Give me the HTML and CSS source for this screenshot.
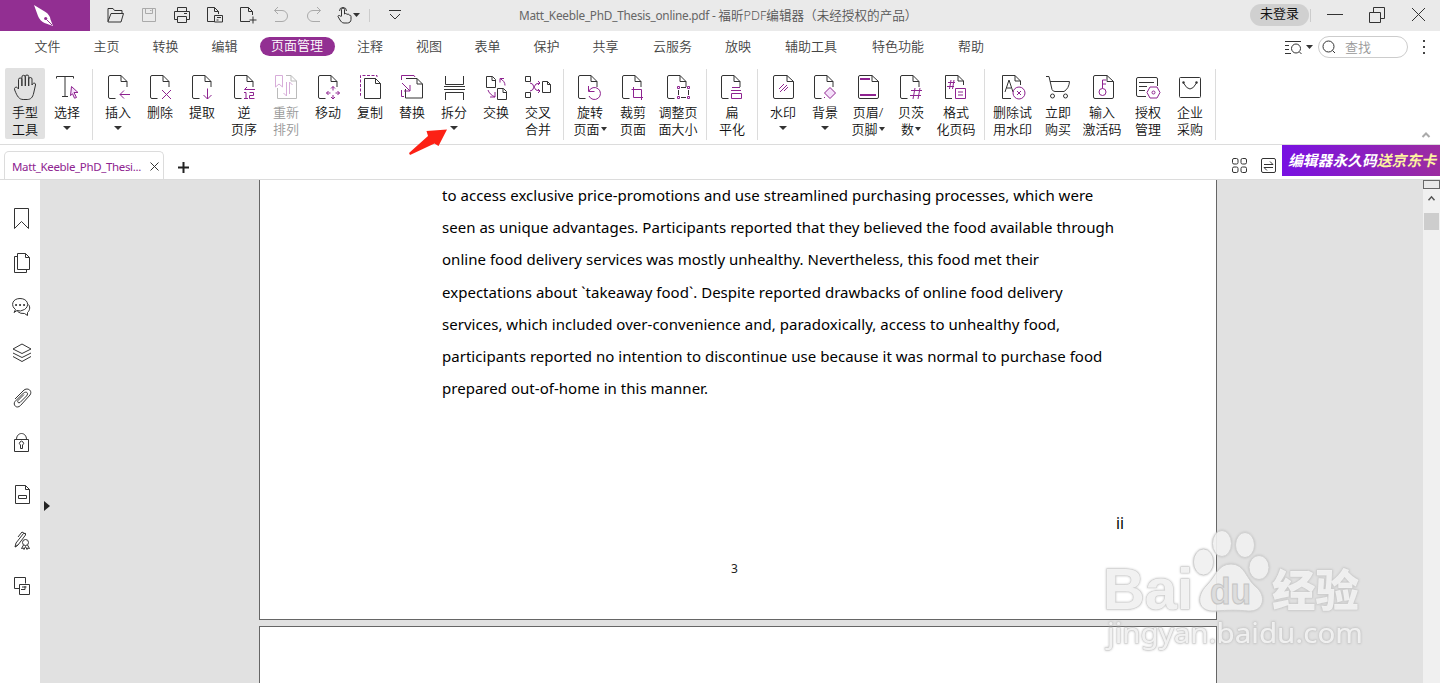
FILE: index.html
```html
<!DOCTYPE html>
<html lang="zh-CN">
<head>
<meta charset="utf-8">
<title>福昕PDF编辑器</title>
<link rel="stylesheet" href="styles.css">
</head>
<body>
<svg class="defs" width="0" height="0">
  <symbol id="cut" viewBox="0 0 20 24"><path d="M7.500 23.500H2a1.500 1.500 0 0 1-1.500-1.500V2A1.500 1.500 0 0 1 2 .5H13l6 6V12M13 .5V6.500h6"/></symbol>
  <symbol id="full" viewBox="0 0 21 24"><path d="M2 .5H14l6.500 6V22a1.500 1.500 0 0 1-1.500 1.500H2A1.500 1.500 0 0 1 .5 22V2A1.500 1.500 0 0 1 2 .5zM14 .5v6h6.500"/></symbol>
</svg>
<div class="app">
  <header class="titlebar">
    <div class="brand"><svg width="22" height="24" viewBox="0 0 22 24"><path class="white" d="M1 1 12.500 8q4.500 3 5 7.500L20 22l-8.500-3q-4.500-2-6.500-7z"/><path class="brand-line" d="m19 21-5.500-5.500"/><circle class="brand-dot" cx="12.700" cy="14.500" r="1.600"/></svg></div>
    <div class="quick">
      <svg viewBox="0 0 20 20"><path d="M2 16.500V3.500h5l1.500 2H16v3M2 16.500 5 8.500h12.500l-2.500 8.500H2z"/></svg>
      <svg class="off" viewBox="0 0 20 20"><path d="M3.500 3.500h13v13h-13zM6.500 3.500v5h7v-5M11 5.500h1.500"/></svg>
      <svg viewBox="0 0 20 20"><path d="M5.500 6V2.500h9V6M5.500 14.500H2.500v-8h15v8h-3M5.500 11.500h9v6h-9zM12 8.500h3"/></svg>
      <svg viewBox="0 0 20 20"><path d="M9 16.500H2.500v-14h7l4 4V9M9.500 2.500v4h4M9.500 10.500h8v6.500h-8zM12 12.500h4M11.500 15h2"/></svg>
      <svg viewBox="0 0 20 20"><path d="M12 16.500H2.500v-14h8l4 4V10M10.500 2.500v4h4M15 11.500v7M11.500 15h7"/></svg>
      <svg class="off" viewBox="0 0 20 20"><path d="M7 2 3.500 5.500 7 9M3.500 5.500H11a5.500 5.500 0 0 1 0 11H4"/></svg>
      <svg class="off" viewBox="0 0 20 20"><path d="m13 2 3.500 3.500L13 9M16.500 5.500H9a5.500 5.500 0 0 0 0 11h7"/></svg>
      <svg class="touch" viewBox="0 0 26 20"><path d="M6.500 11V4.500a1.500 1.500 0 0 1 3 0V9c1-1 2.300-.5 2.500.5 1-.8 2-.3 2.300.7 1-.3 1.700.3 1.700 1.300v3c0 2-1.500 3.500-3.500 3.500H9c-2 0-3-1.500-4-3L3 11.500c0-1.500 2-1.500 3.500.5M4.500 6a3.500 3.500 0 1 1 7 0"/><path class="dark" d="M18 8h7l-3.500 4z"/></svg>
      <i class="quick-sep"></i>
      <svg class="more" viewBox="0 0 14 14"><path d="M1 2.500h12M2 6l5 5 5-5"/></svg>
    </div>
    <div class="doc-title"><span class="latin">Matt_Keeble_PhD_Thesis_online.pdf - </span>福昕PDF编辑器（未经授权的产品）</div>
    <div class="login">未登录</div>
    <i class="login-sep"></i>
    <div class="window"><svg width="96" height="20" viewBox="0 0 96 20"><path d="M0 9.500h16M42.500 7.500h11v10h-11zM46.500 7V2.500h11v11H54M85 3l13 13M98 3 85 16"/></svg></div>
  </header>
  <nav class="menu">
    <span>文件</span><span>主页</span><span>转换</span><span>编辑</span><span class="w86"><b>页面管理</b></span><span class="w60">注释</span><span class="w58">视图</span><span>表单</span><span>保护</span><span>共享</span><span class="w75">云服务</span><span class="w56">放映</span><span class="w90">辅助工具</span><span class="w84">特色功能</span><span class="w62">帮助</span>
    <div class="search-area">
      <svg width="30" height="18" viewBox="0 0 30 18"><path d="M1 3.500h16M1 7.500h4M1 11.500h4M1 15.500h6M15.500 14l2 2"/><circle cx="12" cy="10.500" r="4.500"/><path class="dark" d="M22 7h7l-3.500 4z"/></svg>
      <div class="search"><svg width="14" height="14" viewBox="0 0 14 14"><circle cx="6.500" cy="6.500" r="5.500"/><path d="m10.500 10.500 2.500 2.500"/></svg>查找</div>
      <div class="dots"><i></i><i></i><i></i></div>
    </div>
  </nav>
  <section class="ribbon">
    <div class="tool w40 active"><svg viewBox="0 0 40 30"><path d="M13.500 17V7.500q0-1.500 1.700-1.500t1.700 1.500V14 5q0-1.700 1.700-1.700T20.300 5v9-9.500q0-1.500 1.700-1.500t1.700 1.500V14 7q0-1.500 1.600-1.500T27 7v6c.8-2.500 4-2.500 3.500 0l-1.800 8c-1 4.500-3 6.500-6.500 6.500h-4c-4 0-6-3-8.500-9.500-1-2.500 1.500-3.500 2.500-2.500z"/></svg><p>手型<br>工具</p></div>
    <div class="tool w44"><svg viewBox="0 0 40 30"><path d="M9.500 6.500v-2h17v2M18 4.500v20M15 24.500h6"/><path class="p tint" d="m24.500 14.500 6.500 6h-4l2.500 5-2 .7-2-4.500-2 2z"/></svg><p>选择</p><i class="arrow"></i></div>
    <i class="sep first"></i>
    <div class="tool"><svg viewBox="0 0 40 30"><use href="#cut" x="10" y="3" width="20" height="24"/><path class="p" d="M32 22.500H22m4-4-4 4 4 4"/></svg><p>插入</p><i class="arrow"></i></div>
    <div class="tool"><svg viewBox="0 0 40 30"><use href="#cut" x="10" y="3" width="20" height="24"/><path class="p" d="m22 18 9 9m0-9-9 9"/></svg><p>删除</p></div>
    <div class="tool"><svg viewBox="0 0 40 30"><use href="#cut" x="10" y="3" width="20" height="24"/><path class="p" d="M25.500 16.500V27m-4-4 4 4 4-4"/></svg><p>提取</p></div>
    <div class="tool"><svg viewBox="0 0 40 30"><use href="#cut" x="10" y="3" width="20" height="24"/><path class="p" d="M31 17.500H20.500l2.500-2.500M20 20.500h2v6m-2 0h4m1.500-6h4v3h-4v3h5"/></svg><p>逆<br>页序</p></div>
    <div class="tool off"><svg viewBox="0 0 40 30"><path d="M20 3.500h5l5.500 5.500V26.500h-19V16M25 3.500V9h5.500"/><path class="p" d="M9.500 3.500h7V15l-3.500-3-3.500 3zM20.500 10v14l-3-3M23.500 22V10l3 3"/></svg><p>重新<br>排列</p></div>
    <div class="tool"><svg viewBox="0 0 40 30"><use href="#cut" x="10" y="3" width="20" height="24"/><path class="p" d="M25 18.500v-4m-2 2 2-2 2 2M25 23v4m-2-2 2 2 2-2M22.500 21h-4m2-2-2 2 2 2M27.500 21h4m-2-2 2 2-2 2"/></svg><p>移动</p></div>
    <div class="tool"><svg viewBox="0 0 40 30"><path d="M14.500 6.500h11l5 5v15h-16zM25.500 6.500v5h5"/><path class="p dash" d="M11 23.500h-.5v-20H27V5"/></svg><p>复制</p></div>
    <div class="tool"><svg viewBox="0 0 40 30"><path d="M13.500 17v9h17V12l-5.500-5.500H14M25 6.500v5.500h5.500"/><path class="p" d="M9.500 8V3.500H22L23 5M9.500 18v6.500H12M10 11l8 8m0-6v6h-6"/></svg><p>替换</p></div>
    <div class="tool"><svg viewBox="0 0 40 30"><path d="M11.500 4v8.500h18V4M10 14.500h21M10 17.500h21M11.500 28v-7.500h18V28"/></svg><p>拆分</p><i class="arrow"></i></div>
    <div class="tool"><svg viewBox="0 0 40 30"><path d="M10.500 4.500h6l3 3v8h-9zM16 4.500v4h3.500M21.500 16.500h6l3 3v8h-9zM27 16.500v4h3.500"/><path class="p" d="M29 13.500c0-3-1.500-5-5-7m0 4v-4h4M12 18c1 3 3 5 7 7m0-5v5h-5"/></svg><p>交换</p></div>
    <div class="tool"><svg viewBox="0 0 40 30"><path d="M7.500 4.500h5v5h-5zM7.500 20.500h5v5h-5zM24.500 9.500h5l3 3v8h-8zM29.500 9.500v3h3"/><path class="p" d="M12 11q3 0 4 4t6 4M12 19q3 0 4-4t6-4m-2-2 2 2-2 2m0 4 2 2-2 2"/></svg><p>交叉<br>合并</p></div>
    <i class="sep"></i>
    <div class="tool w44"><svg viewBox="0 0 40 30"><use href="#cut" x="8" y="3" width="20" height="24"/><path class="p" d="M18.500 14v5.500h6M19 19a6 6 0 1 1 0 5"/></svg><p>旋转<br>页面<i class="mini"></i></p></div>
    <div class="tool"><svg viewBox="0 0 40 30"><use href="#cut" x="9" y="3" width="20" height="24"/><path class="p" d="M20.500 15v10.500H30M18.500 17.500H28.500V28"/></svg><p>裁剪<br>页面</p></div>
    <div class="tool w48"><svg viewBox="0 0 40 30"><use href="#cut" x="9" y="3" width="20" height="24"/><path d="M23 15.500h5M23 25.500h5M20.500 18v5M30.500 18v5"/><path class="p" d="M19.500 14.500h2v2h-2zM29.500 14.500h2v2h-2zM19.500 24.500h2v2h-2zM29.500 24.500h2v2h-2z"/></svg><p>调整页<br>面大小</p></div>
    <i class="sep"></i>
    <div class="tool"><svg viewBox="0 0 40 30"><use href="#cut" x="9" y="3" width="20" height="24"/><path class="p" d="M20 15.500h8M19 18.500h10M19.500 21.500h10v5h-10z"/></svg><p>扁<br>平化</p></div>
    <i class="sep"></i>
    <div class="tool"><svg viewBox="0 0 40 30"><use href="#full" x="10" y="3" width="21" height="24"/><path class="p" d="m16 17 5-5m-4 8 7-7m-3 6 4-4"/></svg><p>水印</p><i class="arrow"></i></div>
    <div class="tool"><svg viewBox="0 0 40 30"><use href="#cut" x="9" y="3" width="20" height="24"/><path class="p tint" d="m25 15.500 5.500 5.500-5.500 5.500-5.500-5.500zM19 25.500h1"/></svg><p>背景</p><i class="arrow"></i></div>
    <div class="tool w44"><svg viewBox="0 0 40 30"><use href="#full" x="10" y="3" width="21" height="24"/><path class="p bold" d="M12 7h10M12 23h16"/></svg><p>页眉/<br>页脚<i class="mini"></i></p></div>
    <div class="tool"><svg viewBox="0 0 40 30"><use href="#cut" x="9" y="3" width="20" height="24"/><path class="p" d="M20 18.500h11M19 23.500h11M24 16l-2 11M29 16l-2 11"/></svg><p>贝茨<br>数<i class="mini"></i></p></div>
    <div class="tool w48"><svg viewBox="0 0 40 30"><path d="M16 26.500H9.500v-23H22l5.500 5.500v4M22 3.500V9h5.500"/><path class="p" d="M12 10.500h7M11 14.500h7M15 8l-1.500 9M18 8l-1.500 9M19.500 16.500h10v10h-10zM22 20h5M22 23h5"/></svg><p>格式<br>化页码</p></div>
    <i class="sep"></i>
    <div class="tool w47"><svg viewBox="0 0 40 30"><path d="M18 26.500H9.500v-23H22l5.500 5.500v4M22 3.500V9h5.500M12 20l4-12 4 12M13.500 16H18"/><circle class="p" cx="26" cy="21" r="6"/><path class="p" d="m24 19 4 4m0-4-4 4"/></svg><p>删除试<br>用水印</p></div>
    <div class="tool w44"><svg viewBox="0 0 40 30"><path d="M8 4.500h3l3 13q1 2 3 2h9q5-3 5.500-10H12"/><circle cx="14.500" cy="24" r="2"/><circle cx="27.500" cy="24" r="2"/></svg><p>立即<br>购买</p></div>
    <div class="tool w44"><svg viewBox="0 0 40 30"><use href="#full" x="11" y="3" width="21" height="24"/><circle class="p" cx="20.500" cy="20" r="3.500"/><path class="p" d="M20.500 16.500V8H24M20.500 12H24"/></svg><p>输入<br>激活码</p></div>
    <div class="tool w48"><svg viewBox="0 0 40 30"><path d="M18 24.500H10q-1.500 0-1.500-1.500V7q0-1.500 1.500-1.500h18q1.500 0 1.500 1.500v7M11 10.500h15M11 14.500h8M11 18.500h6"/><path class="p" d="M22 15h7l3 5.500-3 5.500h-7l-3-5.500z"/><circle class="p" cx="25.500" cy="20.500" r="1.500"/></svg><p>授权<br>管理</p></div>
    <div class="tool w36"><svg viewBox="0 0 40 30"><rect x="9.500" y="5.500" width="21" height="20" rx="1"/><path d="M13.500 11q6.500 12 13 0"/><circle class="dark" cx="13.500" cy="10.500" r="1.200"/><circle class="dark" cx="26.500" cy="10.500" r="1.200"/></svg><p>企业<br>采购</p></div>
    <i class="sep last"></i>
    <svg class="fold" viewBox="0 0 10 8"><path d="m1.500 6 3.500-3.500L8.500 6"/></svg>
    <svg class="pointer" width="42" height="32" viewBox="0 0 42 32"><path d="M1 27 20 10 18.500 5 39 3.500 30.500 20 26.500 17.500 2 29z"/></svg>
  </section>
  <div class="tabs">
    <div class="tab"><span>Matt_Keeble_PhD_Thesi...</span><svg width="9" height="9" viewBox="0 0 9 9"><path d="m.5.5 8 8m0-8-8 8"/></svg></div>
    <svg class="plus" width="11" height="11" viewBox="0 0 11 11"><path d="M5.500 0v11M0 5.500h11"/></svg>
    <div class="view-tools">
      <svg width="16" height="16" viewBox="0 0 16 16"><rect x=".5" y=".5" width="5.500" height="5.500" rx="1.500"/><rect x="9" y=".5" width="5.500" height="5.500" rx="1.500"/><rect x=".5" y="9" width="5.500" height="5.500" rx="1.500"/><rect x="9" y="9" width="5.500" height="5.500" rx="1.500"/></svg>
      <svg width="16" height="16" viewBox="0 0 16 16"><rect x=".5" y=".5" width="14" height="14" rx="1.500"/><path d="M3 6.500h9L9 3.500M12 9.500H3l3 3"/></svg>
      <div class="promo">编辑器永久码<em>送京东卡</em></div>
    </div>
  </div>
  <main class="workspace">
    <aside class="side">
      <svg viewBox="0 0 24 24"><path d="M4.500 2.500h14v20l-7-7-7 7z"/></svg>
      <svg viewBox="0 0 24 24"><path d="M7.500 2.500h8l4 4v12h-12zM15.500 2.500v4h4M7 5.500H4.500v16h12V19"/></svg>
      <svg viewBox="0 0 24 24"><path d="M5.500 13.500C.5 10 2 2.500 10 2.500s10 7.500 4.500 11Q10 16 7 14.500l-3 2zM18.500 8.500c2.500 3 .5 7-1 8v3l-3-2q-4 .5-7-2"/><path class="round" d="M6 9h.1M10 9h.1M14 9h.1"/></svg>
      <svg viewBox="0 0 24 24"><path d="m12 3 9 5-9 4.500L3 8zM3 12l9 4.500 9-4.500M3 15.500l9 5 9-5"/></svg>
      <svg viewBox="0 0 24 24"><path d="m5 13 8-8c4-4.500 10-.5 7 4L10.500 19.500c-4 4-8-1-5.500-4L13.500 7c3-2 5.500 0 3 3l-6.500 6.500c-1.500 1-3-.5-2-2l6-6"/></svg>
      <svg viewBox="0 0 24 24"><path d="M4.500 8.500h14v12h-14zM6.500 8.500c0-8 10-8 10 0M10.500 14a2 2 0 1 1 2 0v3.500h-2z"/></svg>
      <svg class="gap" viewBox="0 0 24 24"><path d="M5.500 3.500h10l4 4v14h-14zM15.500 3.500v4h4M8.500 13.500h8v3h-8z"/></svg>
      <svg class="gap-small" viewBox="0 0 24 24"><path d="m5 18 1-4L13.500 4.500q3-1 2 1.500L8 16zM5 18l3-2M8 8l4-5 3.500 2"/><circle cx="15.500" cy="13.500" r="3"/><path d="m13.500 16-2 3.500 2-.5.5 1.500 1.500-3 1.500 3 .5-1.500 2 .5-2-3.500"/></svg>
      <svg viewBox="0 0 24 24"><path d="M9 14.500H4.500v-11h11v6M9.500 10.500h10v10h-10zM12 13h4.500M11 15.500h4V12"/></svg>
    </aside>
    <div class="canvas">
      <div class="expand"></div>
      <div class="sheets">
        <article class="sheet top">
          <p class="prose">to access exclusive price-promotions and use streamlined purchasing processes, which were<br>seen as unique advantages. Participants reported that they believed the food available through<br>online food delivery services was mostly unhealthy. Nevertheless, this food met their<br>expectations about `takeaway food`. Despite reported drawbacks of online food delivery<br>services, which included over-convenience and, paradoxically, access to unhealthy food,<br>participants reported no intention to discontinue use because it was normal to purchase food<br>prepared out-of-home in this manner.</p>
          <div class="roman">ii</div>
          <div class="folio">3</div>
        </article>
        <article class="sheet next"></article>
      </div>
      <svg class="watermark" width="290" height="140" viewBox="0 0 290 140">
        <g class="wm">
          <text class="wm-logo" x="12" y="88" textLength="90" lengthAdjust="spacingAndGlyphs">Bai</text>
          <ellipse cx="112.500" cy="41" rx="10" ry="13"/><ellipse cx="131" cy="22.500" rx="9.500" ry="13"/><ellipse cx="154" cy="24" rx="9.500" ry="12.500"/><ellipse cx="168" cy="46.500" rx="10" ry="12"/>
          <path d="M140 43c14 0 15 15 25 23 11 9 8 25-8 24-9-1-20-1-33 0-17 1-20-14-8-26 9-9 11-21 24-21z"/>
          <text class="wm-cjk" x="181" y="86" textLength="87" lengthAdjust="spacingAndGlyphs">经验</text>
          <text class="wm-url" x="16" y="122" textLength="256" lengthAdjust="spacingAndGlyphs">jingyan.baidu.com</text>
        </g>
        <text class="wm-du" x="119" y="83" textLength="41" lengthAdjust="spacingAndGlyphs">du</text>
      </svg>
    </div>
    <div class="scroll"><i class="split"></i><svg width="17" height="32" viewBox="0 0 17 32"><path d="m4.500 15 4-4.500 4 4.500"/></svg><i class="thumb"></i></div>
  </main>
</div>
</body>
</html>
```
FILE: styles.css
```css
* { box-sizing: border-box; }
body { margin: 0; overflow: hidden; font-family: "Noto Sans", "Noto Sans CJK SC", sans-serif; font-size: 13px; color: #222; }
p { margin: 0; }
i, em, b { font-style: normal; font-weight: inherit; }
svg { display: block; flex: none; fill: none; stroke: #333; stroke-width: 1; overflow: visible; }
.defs { position: absolute; }
.app { width: 1440px; height: 683px; display: flex; flex-direction: column; background: #fff; }
.p { stroke: #8e2390; }
.tint { fill: #f5e0fa; }
.white { fill: #fff; stroke: none; }
.dark { fill: #333; stroke: none; }

.titlebar { height: 31px; flex: none; display: flex; align-items: center; background: #eaeaea; }
.brand { width: 90px; height: 31px; padding: 4px 0 0 33px; background: #922f92; }
.brand-line { stroke: #922f92; }
.brand-dot { fill: #922f92; stroke: none; }
.quick { width: 429px; height: 30px; align-self: flex-start; display: flex; align-items: center; padding-left: 16px; gap: 13px; }
.quick svg { width: 20px; height: 20px; }
.quick .off { stroke: #aaa; }
.quick .touch { width: 26px; margin-left: -2px; }
.quick-sep { width: 1px; height: 13px; background: #ccc; margin-left: -5px; }
.quick .more { width: 14px; height: 14px; margin-left: 5px; }
.doc-title { width: 731px; font-size: 12.6px; font-weight: 350; line-height: 30px; color: #555; white-space: nowrap; }
.latin { font-size: 11.8px; font-weight: 400; letter-spacing: -.25px; color: #666; white-space: pre; }
.login { width: 59px; height: 22px; border-radius: 11px; background: #d0d0d0; color: #111; text-align: center; line-height: 19px; margin-top: -1px; }
.login-sep { width: 1px; height: 13px; margin-left: 1px; background: #ccc; }
.window { margin: -2px 0 0 16px; }

.menu { height: 31px; flex: none; display: flex; align-items: center; padding-left: 18px; color: #444; font-weight: 350; }
.menu > span { width: 59px; text-align: center; height: 19px; line-height: 18px; }
.menu b { display: block; width: 75px; height: 19px; line-height: 17px; margin: 0 auto; border-radius: 10px; background: #922f92; color: #fff; }
.menu > .w86 { width: 86px; } .menu > .w60 { width: 60px; } .menu > .w58 { width: 58px; }
.menu > .w75 { width: 75px; } .menu > .w56 { width: 56px; } .menu > .w90 { width: 90px; }
.menu > .w84 { width: 84px; } .menu > .w62 { width: 62px; }
.search-area { margin-left: auto; width: 156px; display: flex; align-items: center; }
.search { margin-left: 4px; width: 90px; height: 22px; border: 1px solid #ccc; border-radius: 11px; display: flex; align-items: center; padding-left: 3px; gap: 9px; color: #999; line-height: 18px; }
.dots { display: flex; flex-direction: column; gap: 4px; margin-left: 15px; }
.dots i { width: 2px; height: 2px; background: #444; }

.ribbon { position: relative; height: 83px; flex: none; display: flex; padding: 6px 0 0 5px; border-bottom: 1px solid #dcdcdc; font-weight: 350; color: #111; }
.tool { width: 42px; height: 71px; flex: none; padding-top: 4px; display: flex; flex-direction: column; align-items: center; text-align: center; }
.tool svg { width: 40px; height: 30px; }
.tool p { margin-top: 2px; line-height: 17px; white-space: nowrap; }
.tool.active { background: #e1e1e1; border-radius: 2px; }
.tool.off { color: #999; }
.tool.off svg { stroke: #bbb; }
.tool.off .p { stroke: #d7acd9; }
.tool.w36 { width: 36px; } .tool.w40 { width: 40px; } .tool.w44 { width: 44px; }
.tool.w47 { width: 47px; } .tool.w48 { width: 48px; }
.bold { stroke-width: 2; }
.dash { stroke-dasharray: 3 1.500; }
.arrow { border: 4px solid transparent; border-top: 4px solid #333; border-bottom: 0; margin: 5px 1px 0 0; }
.mini { display: inline-block; border: 3.500px solid transparent; border-top: 4px solid #333; border-bottom: 0; vertical-align: 3px; margin-left: 1px; }
.sep { width: 1px; height: 71px; flex: none; margin: 1px 4px 0; background: #dcdcdc; }
.sep.first { margin-left: 3px; }
.sep.last { margin-left: 7px; }
.fold { position: absolute; left: 1421px; top: 69px; width: 10px; height: 8px; stroke: #aaa; stroke-width: 2; }
.pointer { position: absolute; left: 408px; top: 64px; }
.pointer path { fill: #fc2115; stroke: none; }

.tabs { height: 35px; flex: none; display: flex; align-items: flex-end; border-bottom: 1px solid #dcdcdc; }
.tab { width: 160px; height: 28px; margin-left: 4px; border: 1px solid #dcdcdc; border-bottom: 0; border-radius: 5px 5px 0 0; padding: 2px 4px 0 7px; display: flex; align-items: center; justify-content: space-between; color: #8e2390; font-size: 11.5px; letter-spacing: -.35px; }
.plus { stroke-width: 2; stroke: #222; margin: 0 0 6px 14px; }
.view-tools { height: 34px; margin-left: auto; display: flex; gap: 13px; }
.view-tools > svg { margin-top: 13px; }
.promo { width: 158px; height: 31px; line-height: 31px; margin-left: -8px; background: linear-gradient(90deg, #7811e2, #9c2ca0); color: #fff; font-size: 14.8px; font-weight: 700; font-style: italic; padding-left: 6px; white-space: nowrap; overflow: hidden; }
.promo em { color: #fdf3a0; font-style: italic; }

.workspace { flex: 1; min-height: 0; display: flex; }
.side { width: 40px; flex: none; padding: 26px 0 0 10px; display: flex; flex-direction: column; gap: 21px; background: #fff; }
.side svg { width: 24px; height: 24px; }
.side .gap { margin-top: 6px; }
.side .gap-small { margin-top: 2px; }
.round { stroke-width: 2; stroke-linecap: round; }
.canvas { position: relative; width: 1383px; flex: none; background: #e1e1e1; overflow: hidden; display: flex; }
.expand { width: 6px; height: 10px; margin: 321px 0 0 4px; border: 5px solid transparent; border-left: 6px solid #222; border-right: 0; }
.sheets { margin-left: 209px; display: flex; flex-direction: column; gap: 6px; }
.sheet { width: 958px; flex: none; background: #fff; border: 1px solid #666; }
.sheet.top { height: 440px; border-top: 0; padding-left: 182px; }
.sheet.next { height: 80px; }
.prose { margin-top: -1px; font-size: 15px; line-height: 32.170px; letter-spacing: .027px; color: #000; white-space: nowrap; }
.roman { margin: 103px 0 0 674px; line-height: 32px; font-size: 15.5px; color: #000; }
.folio { margin: 18px 0 0 289px; font: 12px/24px "Noto Sans", sans-serif; color: #222; }
.watermark { position: absolute; left: 1051px; top: 341px; }
.wm { fill: #fff; fill-opacity: .72; stroke: #d0d0d0; filter: drop-shadow(0 0 1px #bbb); }
.wm text { paint-order: stroke; }
.wm-logo { font: bold 58px "Liberation Sans", sans-serif; }
.wm-cjk { font: 900 44px "Noto Sans CJK SC", sans-serif; }
.wm-url { font: 28px "Noto Sans", sans-serif; }
.wm-du { font: bold 36px "Liberation Sans", sans-serif; fill: #ddd; stroke: #c4c4c4; }
.scroll { width: 17px; background: #f0f0f0; }
.split { display: block; height: 9px; border: 1px solid #666; background: #e8e8e8; }
.scroll svg { height: 24px; stroke: #555; stroke-width: 2; }
.thumb { display: block; width: 15px; height: 17px; margin-left: 1px; background: #cdcdcd; }
```
